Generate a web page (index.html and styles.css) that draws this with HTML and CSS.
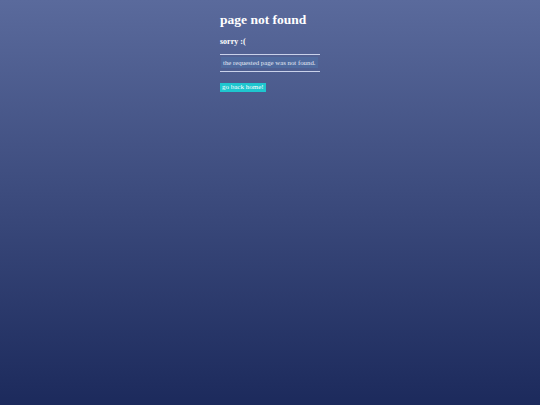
FILE: index.html
```html
<!DOCTYPE html>
<html lang="en">
<head>
<meta charset="utf-8">
<title>page not found</title>
<link rel="stylesheet" href="styles.css">
</head>
<body>
  <main class="notfound">
    <h1 class="notfound__title">page not found</h1>
    <h2 class="notfound__subtitle">sorry :(</h2>
    <div class="notfound__message">
      <p class="notfound__text">the requested page was not found.</p>
    </div>
    <a class="notfound__home" href="/">go back home!</a>
  </main>
</body>
</html>
```

FILE: styles.css
```css
html, body {
  margin: 0;
  height: 100%;
}

body {
  background: linear-gradient(to bottom, #5a6a9c 0%, #1c2a5c 100%);
  font-family: "Liberation Serif", "Times New Roman", serif;
  color: #ffffff;
}

.notfound {
  width: 100px;
  margin: 0 auto;
  padding-top: 12px;
  display: flex;
  flex-direction: column;
  align-items: flex-start;
}

.notfound__title {
  margin: 0;
  font-size: 13.5px;
  font-weight: bold;
  line-height: 16px;
  white-space: nowrap;
}

.notfound__subtitle {
  margin: 9px 0 0;
  font-size: 8px;
  font-weight: bold;
  line-height: 10px;
}

.notfound__message {
  align-self: stretch;
  display: flex;
  margin-top: 7px;
  border-top: 1px solid #c9d1ea;
  border-bottom: 1px solid #c9d1ea;
  padding: 2px 1px 3px;
}

.notfound__text {
  margin: 0;
  padding: 1px 2px;
  background: #4f6a9e;
  color: #e4e8f4;
  font-size: 6.8px;
  line-height: 9px;
  white-space: nowrap;
}

.notfound__home {
  margin-top: 11px;
  padding: 0 2px;
  background: #1fc6cf;
  color: #ffffff;
  font-size: 7px;
  line-height: 9px;
  white-space: nowrap;
  text-decoration: none;
}
```
